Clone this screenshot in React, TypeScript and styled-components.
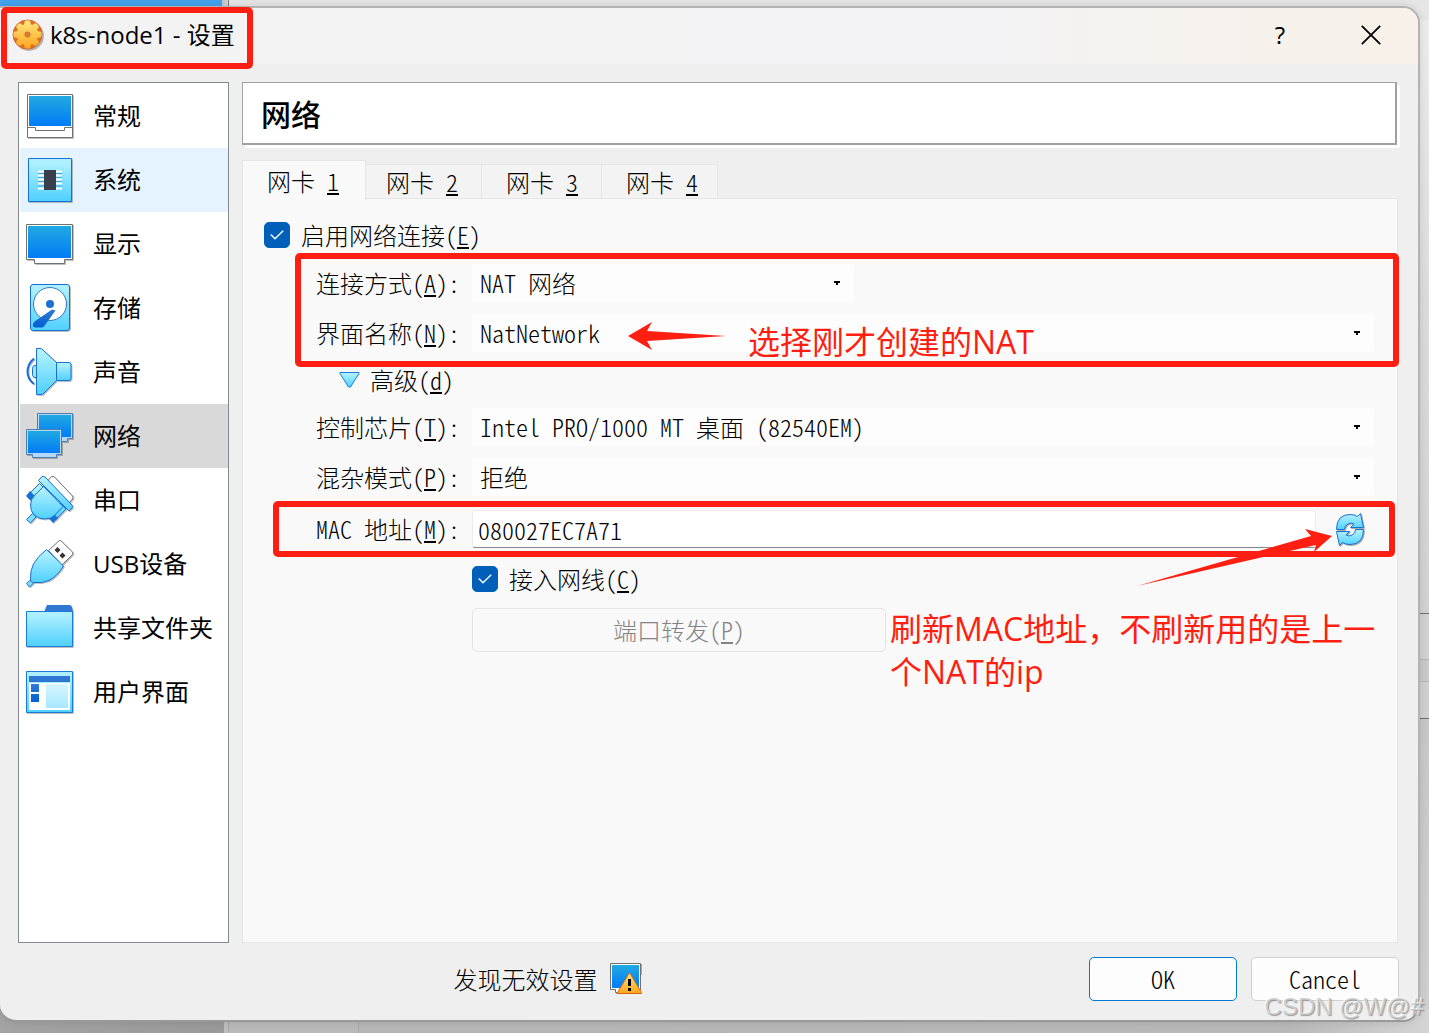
import React, { useState } from "react";
import styled, { createGlobalStyle, css } from "styled-components";

const UI_FONT = '"Open Sans", "Noto Sans CJK SC", sans-serif';
const FORM_FONT = '"Noto Sans CJK SC", monospace';
const MARK = "#ff1f12";

const GlobalStyle = createGlobalStyle`
  *, *::before, *::after { box-sizing: border-box; }
  body { margin: 0; background: #c8c8c8; color: #000; font: 24px/32px ${UI_FONT}; }
  button, input, select {
    margin: 0; padding: 0; border: 0; border-radius: 0; background: none;
    color: inherit; font: inherit; font-feature-settings: inherit;
  }
  u { text-decoration-thickness: 2px; text-underline-offset: 2px; text-decoration-skip-ink: none; }
`;

const Desktop = styled.div`
  position: relative;
  display: flex;
  min-height: 100vh;
  padding: 6px 9px 11px 0;
  overflow: hidden;
  background:
    linear-gradient(90deg, #45a3ee 222px, #c4c4c4 222px, #d4d4d4 228px, #77797d 228px, #77797d 229px, #e6e6e6 229px) top / 100% 20px no-repeat,
    linear-gradient(90deg, #a3a3a3, #999 224px, #bdbdbd 224px, #bdbdbd 228px, #a8a8a8 228px, #a8a8a8 229px, #b9b9b9 229px, #b9b9b9 358px, #a8a8a8 358px, #a8a8a8 359px, #b6b6b6 359px, #b8b8b8 90%, #d4d4d4) bottom / 100% 24px no-repeat,
    linear-gradient(#eee, #dcdcdc 300px, #d2d2d2 613px, #6e6e74 613px, #6e6e74 614px, #d2d2d2 614px, #d2d2d2 659px, #b5b5b5 659px, #b5b5b5 660px, #cacaca 660px, #cacaca 681px, #b5b5b5 681px, #b5b5b5 682px, #d0d0d0 682px, #d0d0d0 718px, #6e6e74 718px, #6e6e74 719px, #c8c8c8 719px, #d0d0d0);
`;

const Dialog = styled.main`
  flex: 1;
  display: flex;
  flex-direction: column;
  min-width: 0;
  border: solid #b3b3b3;
  border-width: 2px 2px 2px 0;
  border-bottom-color: #999;
  border-radius: 0 17px 17px 17px;
  background: #efefef;
  box-shadow: 0 0 8px rgba(0, 0, 0, 0.12);
`;

const TitleBar = styled.header`
  display: flex;
  align-items: center;
  height: 56px;
  padding: 0 23px 2px 12px;
  border-radius: 0 15px 0 0;
  background: linear-gradient(90deg, #f3f3f3, #f3f3f5 70%, #f6f2ee 82%, #f7f1e9);
`;

const WindowTitle = styled.h1`
  flex: 1;
  margin: 0 0 0 6px;
  font-size: 24px;
  font-weight: 400;
`;

const CaptionButton = styled.button`
  display: grid;
  place-items: center;
  width: 48px;
  height: 40px;
  & + & { margin-left: 43px; }
`;

const Content = styled.div`
  flex: 1;
  display: grid;
  grid-template-columns: 211px minmax(0, 1fr);
  column-gap: 13px;
  padding: 18px 20px 0 18px;
`;

const Sidebar = styled.nav`
  padding: 1px 0 1px 1px;
  border: 1px solid #828790;
  background: #fff;
`;

const NavItem = styled.button<{ $state?: "hover" | "selected" }>`
  display: flex;
  align-items: center;
  gap: 19px;
  width: 100%;
  height: 64px;
  padding-left: 6px;
  white-space: nowrap;
  ${({ $state }) => $state === "hover" && css`background: #e5f3ff;`}
  ${({ $state }) => $state === "selected" && css`background: #d9d9d9;`}
  svg { filter: drop-shadow(1px 1px 0 rgba(0, 0, 0, 0.25)); }
`;

const Page = styled.section`
  display: flex;
  flex-direction: column;
  min-width: 0;
  font-family: ${FORM_FONT};
  font-weight: 300;
  font-feature-settings: "hwid";
`;

const PageTitle = styled.h2`
  margin: 0 1px 15px 0;
  padding: 0 18px;
  border: solid #a0a0a0;
  border-width: 1px 2px 2px 1px;
  background: #fff;
  box-shadow: 3px 3px 0 #fff;
  font-size: 30px;
  font-weight: 500;
  line-height: 60px;
`;

const TabList = styled.div`
  display: flex;
  align-items: flex-end;
  height: 38px;
`;

const Tab = styled.button<{ $active: boolean }>`
  width: 120px;
  height: 34px;
  padding-left: 24px;
  border: 1px solid #e5e5e5;
  border-left-width: 0;
  border-bottom: 0;
  background: #f3f3f3;
  line-height: 32px;
  text-align: left;
  &:last-child { width: 116px; }
  ${({ $active }) => $active && css`
    z-index: 1;
    width: 124px;
    height: 40px;
    margin: 0 -4px -2px 0;
    border-left-width: 1px;
    background: #f9f9f9;
    line-height: 36px;
  `}
`;

const Panel = styled.div`
  flex: 1;
  display: flex;
  flex-direction: column;
  gap: 12px;
  padding: 19px 23px 24px 21px;
  border: 1px solid #e5e5e5;
  background: #f9f9f9;
`;

const CheckLabel = styled.label`
  display: flex;
  align-items: center;
  gap: 11px;
  height: 34px;
`;

const CheckInput = styled.input`
  appearance: none;
  width: 26px;
  height: 26px;
  border: 1px solid #868686;
  border-radius: 5px;
  background: #fff;
  &:checked {
    border-color: #005fb8;
    background: #005fb8;
  }
`;

const CheckBox = styled.span`
  display: grid;
  > * { grid-area: 1 / 1; }
  svg { place-self: center; pointer-events: none; }
`;

const Fields = styled.div`
  display: grid;
  grid-template-columns: 156px minmax(0, 1fr);
  row-gap: 12px;
  padding-left: 52px;
  align-items: center;
`;

const FieldLabel = styled.label`
  white-space: pre;
`;

const SelectBox = styled.div<{ $narrow?: boolean }>`
  display: grid;
  align-items: center;
  max-width: ${({ $narrow }) => ($narrow ? "382px" : "none")};
  > * { grid-area: 1 / 1; }
  svg { justify-self: end; margin-right: 14px; pointer-events: none; }
`;

const Select = styled.select`
  appearance: none;
  width: 100%;
  height: 38px;
  padding: 0 32px 0 8px;
  border-radius: 3px;
  background: #fdfdfd;
`;

const Advanced = styled.button`
  grid-column: 1 / -1;
  justify-self: start;
  display: flex;
  align-items: center;
  gap: 10px;
  height: 32px;
  padding-left: 23px;
`;

const MacRow = styled.div`
  display: flex;
  align-items: center;
  gap: 19px;
  height: 42px;
  padding-right: 7px;
`;

const TextInput = styled.input`
  flex: 1;
  min-width: 0;
  height: 38px;
  padding: 0 5px;
  border: 1px solid #ececec;
  border-bottom-color: #868686;
  border-radius: 3px;
  background: #fff;
`;

const RefreshButton = styled.button`
  display: grid;
  width: 32px;
  height: 34px;
  svg { filter: drop-shadow(1px 1px 0 rgba(0, 0, 0, 0.3)); }
`;

const SecondColumn = styled.div`
  grid-column: 2;
`;

const PushButton = styled.button<{ $primary?: boolean }>`
  width: 148px;
  height: 44px;
  border: 1px solid ${({ $primary }) => ($primary ? "#0078d4" : "#d0d0d0")};
  border-radius: 5px;
  background: #fdfdfd;
  &:disabled {
    width: 414px;
    max-width: 100%;
    border-color: #e5e5e5;
    background: #f9f9f9;
    color: #838383;
  }
`;

const Footer = styled.footer`
  display: flex;
  align-items: center;
  gap: 14px;
  padding: 14px 19px 19px 20px;
  font-family: ${FORM_FONT};
  font-weight: 300;
  font-feature-settings: "hwid";
`;

const Status = styled.div`
  flex: 1;
  display: flex;
  align-items: center;
  justify-content: center;
  gap: 12px;
`;

const Marks = styled.div`
  position: absolute;
  inset: 0;
  overflow: hidden;
  pointer-events: none;
  color: ${MARK};
  font-size: 32px;
  line-height: 43px;
`;

const MarkBox = styled.div<{ $top: number; $left: number; $height: number; $width?: number; $right?: number }>`
  position: absolute;
  top: ${({ $top }) => $top}px;
  left: ${({ $left }) => $left}px;
  right: ${({ $right }) => ($right === undefined ? "auto" : `${$right}px`)};
  width: ${({ $width }) => ($width === undefined ? "auto" : `${$width}px`)};
  height: ${({ $height }) => $height}px;
  border: 6px solid ${MARK};
  border-radius: 5px;
`;

const ChooseNote = styled.div`
  position: absolute;
  top: 320px;
  left: 628px;
  display: flex;
  align-items: flex-start;
  gap: 20px;
  white-space: nowrap;
  svg { margin-top: 2px; }
`;

const RefreshArrow = styled.svg`
  position: absolute;
  top: 526px;
  right: 95px;
`;

const RefreshNote = styled.p`
  position: absolute;
  top: 607px;
  right: 36px;
  width: 503px;
  margin: 0;
`;

const Watermark = styled.div`
  position: absolute;
  right: 5px;
  bottom: 11px;
  color: rgba(200, 200, 200, 0.8);
  font: 24px/30px "Liberation Sans", sans-serif;
  text-shadow: -1px -1px 0 rgba(255, 255, 255, 0.7), 1px 1px 1px rgba(110, 110, 110, 0.65);
`;

const Gradients = () => (
  <svg width="0" height="0" style={{ display: "block", position: "absolute" }} aria-hidden="true">
    <defs>
      <linearGradient id="aqua" x1="0" y1="0" x2="0" y2="1">
        <stop offset="0.1" stopColor="#aef0ff" />
        <stop offset="1" stopColor="#4fd0ff" />
      </linearGradient>
      <linearGradient id="screen" x1="0" y1="0" x2="0" y2="1">
        <stop offset="0" stopColor="#21a9e1" />
        <stop offset="1" stopColor="#007cf7" />
      </linearGradient>
      <linearGradient id="pale" x1="0" y1="0" x2="0" y2="1">
        <stop offset="0" stopColor="#d8f7ff" />
        <stop offset="1" stopColor="#a5e8ff" />
      </linearGradient>
      <linearGradient id="dark" x1="0" y1="0" x2="0" y2="1">
        <stop offset="0" stopColor="#3279d2" />
        <stop offset="1" stopColor="#005fd4" />
      </linearGradient>
      <linearGradient id="gold" x1="0" y1="0" x2="0" y2="1">
        <stop offset="0" stopColor="#ffe680" />
        <stop offset="1" stopColor="#ffa51f" />
      </linearGradient>
    </defs>
  </svg>
);

const drawings: Record<string, React.ReactNode> = {
  general: (
    <>
      <path d="M1.5 2.5h45v43h-45z" fill="#fff" stroke="#707070" />
      <path d="M3 4h42v30H3z" fill="url(#screen)" />
      <path d="M1.5 35.5h8v3h29v-3h8" fill="none" stroke="#707070" />
    </>
  ),
  system: (
    <>
      <path d="M2.5 2.5h43v43h-43z" fill="url(#aqua)" stroke="#1a6fd2" />
      <path d="M12 15.5h24M12 19.5h24M12 23.5h24M12 27.5h24M12 32.5h24" stroke="#fff" strokeWidth="2" />
      <path d="M12 17.5h24M12 21.5h24M12 25.5h24M12 30h24" stroke="#47a3dc" />
      <path d="M18 14h12v20H18z" fill="#3a3f4b" />
    </>
  ),
  display: (
    <>
      <path d="M.5 4.5h46v35h-8v4h-30v-4h-8z" fill="#fff" stroke="#707070" />
      <path d="M2 6h43v32H2z" fill="url(#screen)" />
    </>
  ),
  storage: (
    <>
      <rect x="4.5" y=".5" width="39" height="46" rx="2.5" fill="url(#aqua)" stroke="#1a6fd2" />
      <circle cx="24" cy="20" r="16.5" fill="#fff" stroke="#2d78d0" />
      <circle cx="24" cy="20" r="4" fill="#1c6fd3" />
      <path d="M29.500 26.500 26 25.500 8.500 37.500Q6.500 39 7 42q.5 1.500 4 1.500h4.500q2 0 3.500-2.500z" fill="url(#dark)" />
    </>
  ),
  audio: (
    <>
      <path d="M8 10.500Q1.500 16 1.500 23.500T8 36" fill="none" stroke="#1a6fd2" strokeWidth="2" />
      <path d="M11 17.500H9q-2.500 0-2.500 3v6q0 3 2.500 3h2z" fill="#9ce9ff" stroke="#1a6fd2" />
      <path d="M30.500 14.500H43q2 0 2 2v14q0 2-2 2H30.500z" fill="url(#aqua)" stroke="#1a6fd2" />
      <path d="M10.500.5H14q2 0 3 1.500l13.500 12.500v18L18 45q-1 1.500-3 1.500h-4.500z" fill="url(#aqua)" stroke="#1a6fd2" />
    </>
  ),
  network: (
    <>
      <path d="M11.500 1.500h35v25h-5v3h-24v-3h-6z" fill="#b3d7f8" stroke="#4f7faf" />
      <path d="M13 3h32v22H13z" fill="url(#screen)" />
      <path d="M.5 17.500h35v25h-5v3h-24v-3h-6z" fill="#b3d7f8" stroke="#4f7faf" />
      <path d="M2 19h32v22H2z" fill="url(#screen)" />
    </>
  ),
  serial: (
    <>
      <path d="M22 4.500 25.500.500q1.500-.5 3 .5l18 19q1 1.500 0 3L43 27z" fill="#fff" stroke="#707070" />
      <path d="m13.500 7.500 5 5-11 11-5-5zM34 27l6 6L30 43.500l-6-5z" fill="url(#aqua)" stroke="#1a6fd2" />
      <path d="m4 15 5 5L4.500 24.500 0 20zM27 37l5 5-5 5-4.500-5z" fill="#1a6fd2" />
      <path d="m6.500 37.500 3.500 3.500-5.500 6L.5 43.500z" fill="#7fdfff" stroke="#1a6fd2" />
      <path d="M17.500 10.500 9 19q-4.500 4-4.500 10 0 6 3.500 10 4.500 4 10.500 4 7 0 10.500-4l8-8.500z" fill="url(#aqua)" stroke="#1a6fd2" />
      <path d="m12.500 4.500 3.500-4q1.500-.5 3 .5l27 28q1 1.500 0 3L43 35z" fill="url(#aqua)" stroke="#1a6fd2" />
    </>
  ),
  usb: (
    <>
      <path d="M22.500 10.500 33 .8q1-.8 2 0L46.500 12q.8 1 0 2.500L36 25z" fill="#fff" stroke="#707070" />
      <path d="m28.500 10 3-3 3 3-3 3zM33.500 15.500l3-3 3 3-3 3z" fill="#333" />
      <path d="m5 39.500 3 3L3.500 47 .5 43.500z" fill="#7fdfff" stroke="#1a6fd2" />
      <path d="M20.500 9.500 37.500 26Q31 36.500 23 40.500q-7 3-16.500 2-2-.5-2-3-.5-9 3-15.500Q12 16 20.500 9.500z" fill="url(#aqua)" stroke="#1a6fd2" />
    </>
  ),
  folder: (
    <>
      <path d="m18 8 3-7h23q2 0 3 7z" fill="#2f77d0" />
      <path d="M.5 7.500h46v35H.5z" fill="url(#aqua)" stroke="#1a7bd8" />
    </>
  ),
  interface: (
    <>
      <path d="M.5 3.500h46v41H.5z" fill="url(#aqua)" stroke="#1a7bd8" />
      <path d="M3 8h41v6H3z" fill="#2f77d0" />
      <path d="M3 15h41v27H3z" fill="#fff" />
      <path d="M5 16h8v8H5zM5 26h8v8H5z" fill="url(#dark)" />
      <path d="M20 16h22v24H20z" fill="url(#pale)" />
    </>
  ),
};

const gearPath = Array.from({ length: 96 }, (_, i) => {
  const a = (i / 96) * Math.PI * 2;
  const wave = Math.cos(a * 8) + 0.4;
  const r = 12.3 + Math.max(-1, Math.min(1, wave * 2)) * 1.7;
  return `${i ? "L" : "M"}${(15.5 + Math.sin(a) * r).toFixed(2)} ${(15.5 - Math.cos(a) * r).toFixed(2)}`;
}).join("") + "Z";

const GearIcon = () => (
  <svg width="32" height="32" viewBox="0 0 32 32" aria-hidden="true">
    <circle cx="17" cy="17" r="15" fill="#b5b5b5" />
    <circle cx="15.5" cy="15.5" r="14.5" fill="#e0701f" stroke="#d9652a" />
    <path d={gearPath} fill="url(#gold)" />
    <circle cx="15.5" cy="15.5" r="2.300" fill="#b98a5a" stroke="#e8711b" strokeWidth="1.500" />
  </svg>
);

const DropArrow = () => (
  <svg width="6" height="4" viewBox="0 0 6 4" aria-hidden="true">
    <path d="M0 0h6v2H4v2H2V2H0z" />
  </svg>
);

const REFRESH_HALF =
  "M1.500 17.500Q1.500 2.500 15 2.500q4.500 0 7.500 2l3-3 3 14H15.500l3.500-3.500q-3-2-6 0-3.500 1.500-3.500 5.500z";

const RefreshIcon = () => (
  <svg width="32" height="34" viewBox="0 0 32 34" aria-hidden="true">
    <g fill="url(#aqua)" stroke="#1a6fd2">
      <path d={REFRESH_HALF} />
      <path d="M28.500 17.500q0 15-13.500 15-4.500 0-7.500-2l-3 3-3-14h13L11 23q3 2 6 0 3.500-1.500 3.500-5.500z" />
    </g>
  </svg>
);

const WarningIcon = () => (
  <svg width="32" height="32" viewBox="0 0 32 32" aria-hidden="true">
    <path d="M1 28h5v3h3V12h23V1h-1v26z" fill="#aaa" />
    <path d="M.5.500h30v26h-4v3H5.500v-3h-5z" fill="#fff" stroke="#707070" />
    <path d="M2 2h27v23H2z" fill="url(#screen)" />
    <path d="M19.500 9.500 31.500 29.500v1H7.500v-1z" fill="url(#gold)" stroke="#d9600f" strokeLinejoin="round" />
    <path d="M18 16h3v7h-3zM18 25h3v3h-3z" />
  </svg>
);

type CheckProps = { children: React.ReactNode };

function Check({ children }: CheckProps) {
  const [on, setOn] = useState(true);
  return (
    <CheckLabel>
      <CheckBox>
        <CheckInput type="checkbox" checked={on} onChange={() => setOn(!on)} />
        {on && (
          <svg width="14" height="10" viewBox="0 0 14 10" aria-hidden="true">
            <path d="m.8 4.500 4.200 4.200L13.200.8" fill="none" stroke="#fff" strokeWidth="1.400" />
          </svg>
        )}
      </CheckBox>
      <span>{children}</span>
    </CheckLabel>
  );
}

type SelectFieldProps = { id: string; label: string; hotkey: string; value: string; narrow?: boolean };

function SelectField({ id, label, hotkey, value, narrow }: SelectFieldProps) {
  return (
    <>
      <FieldLabel htmlFor={id}>{label}(<u>{hotkey}</u>):</FieldLabel>
      <SelectBox $narrow={narrow}>
        <Select id={id} defaultValue={value}>
          <option>{value}</option>
        </Select>
        <DropArrow />
      </SelectBox>
    </>
  );
}

const sections: { icon: string; name: string; state?: "hover" | "selected" }[] = [
  { icon: "general", name: "常规" },
  { icon: "system", name: "系统", state: "hover" },
  { icon: "display", name: "显示" },
  { icon: "storage", name: "存储" },
  { icon: "audio", name: "声音" },
  { icon: "network", name: "网络", state: "selected" },
  { icon: "serial", name: "串口" },
  { icon: "usb", name: "USB设备" },
  { icon: "folder", name: "共享文件夹" },
  { icon: "interface", name: "用户界面" },
];

export default function App() {
  const [tab, setTab] = useState(1);
  const [mac, setMac] = useState("080027EC7A71");

  return (
    <Desktop>
      <GlobalStyle />
      <Gradients />
      <Dialog>
        <TitleBar>
          <GearIcon />
          <WindowTitle>k8s-node1 - 设置</WindowTitle>
          <CaptionButton type="button">?</CaptionButton>
          <CaptionButton type="button" aria-label="Close">
            <svg width="20" height="20" viewBox="0 0 20 20" aria-hidden="true">
              <path d="m.8.8 18.400 18.400M19.200.8.8 19.200" stroke="#000" strokeWidth="1.800" />
            </svg>
          </CaptionButton>
        </TitleBar>

        <Content>
          <Sidebar>
            {sections.map(({ icon, name, state }) => (
              <NavItem key={icon} type="button" $state={state}>
                <svg width="48" height="48" viewBox="0 0 48 48" aria-hidden="true">{drawings[icon]}</svg>
                {name}
              </NavItem>
            ))}
          </Sidebar>

          <Page>
            <PageTitle>网络</PageTitle>
            <TabList role="tablist">
              {[1, 2, 3, 4].map((n) => (
                <Tab key={n} type="button" role="tab" aria-selected={tab === n} $active={tab === n} onClick={() => setTab(n)}>
                  网卡 <u>{n}</u>
                </Tab>
              ))}
            </TabList>
            <Panel role="tabpanel">
              <Check>启用网络连接(<u>E</u>)</Check>
              <Fields>
                <SelectField id="attached" label="连接方式" hotkey="A" value="NAT 网络" narrow />
                <SelectField id="name" label="界面名称" hotkey="N" value="NatNetwork" />
                <Advanced type="button">
                  <svg width="21" height="16" viewBox="0 0 21 16" aria-hidden="true">
                    <path d="M1 .500h19v1L11.500 15h-2L1 1.500z" fill="url(#aqua)" stroke="#1a7bd8" />
                  </svg>
                  <span>高级(<u>d</u>)</span>
                </Advanced>
                <SelectField id="adapter" label="控制芯片" hotkey="T" value="Intel PRO/1000 MT 桌面 (82540EM)" />
                <SelectField id="promiscuous" label="混杂模式" hotkey="P" value="拒绝" />
                <FieldLabel htmlFor="mac">MAC 地址(<u>M</u>):</FieldLabel>
                <MacRow>
                  <TextInput id="mac" value={mac} onChange={(e) => setMac(e.target.value)} />
                  <RefreshButton type="button" aria-label="刷新"><RefreshIcon /></RefreshButton>
                </MacRow>
                <SecondColumn><Check>接入网线(<u>C</u>)</Check></SecondColumn>
                <SecondColumn>
                  <PushButton type="button" disabled>端口转发(<u>P</u>)</PushButton>
                </SecondColumn>
              </Fields>
            </Panel>
          </Page>
        </Content>

        <Footer>
          <Status>
            <span>发现无效设置</span>
            <WarningIcon />
          </Status>
          <PushButton type="button" $primary>OK</PushButton>
          <PushButton type="button">Cancel</PushButton>
        </Footer>
      </Dialog>

      <Marks>
        <MarkBox $top={7} $left={1} $width={252} $height={62} />
        <MarkBox $top={253} $left={295} $right={30} $height={114} />
        <MarkBox $top={501} $left={273} $right={34} $height={56} />
        <ChooseNote>
          <svg width="100" height="28" viewBox="0 0 100 28" aria-hidden="true">
            <path d="M0 14 24 0 19 9 98 14 19 19 24 28z" fill={MARK} />
          </svg>
          选择刚才创建的NAT
        </ChooseNote>
        <RefreshArrow width="198" height="62" viewBox="0 0 198 62" aria-hidden="true">
          <path d="M196 10 169 3 175 10 1 60 180 19 178 26z" fill={MARK} />
        </RefreshArrow>
        <RefreshNote>刷新MAC地址，不刷新用的是上一个NAT的ip</RefreshNote>
      </Marks>
      <Watermark>CSDN @W@#</Watermark>
    </Desktop>
  );
}
